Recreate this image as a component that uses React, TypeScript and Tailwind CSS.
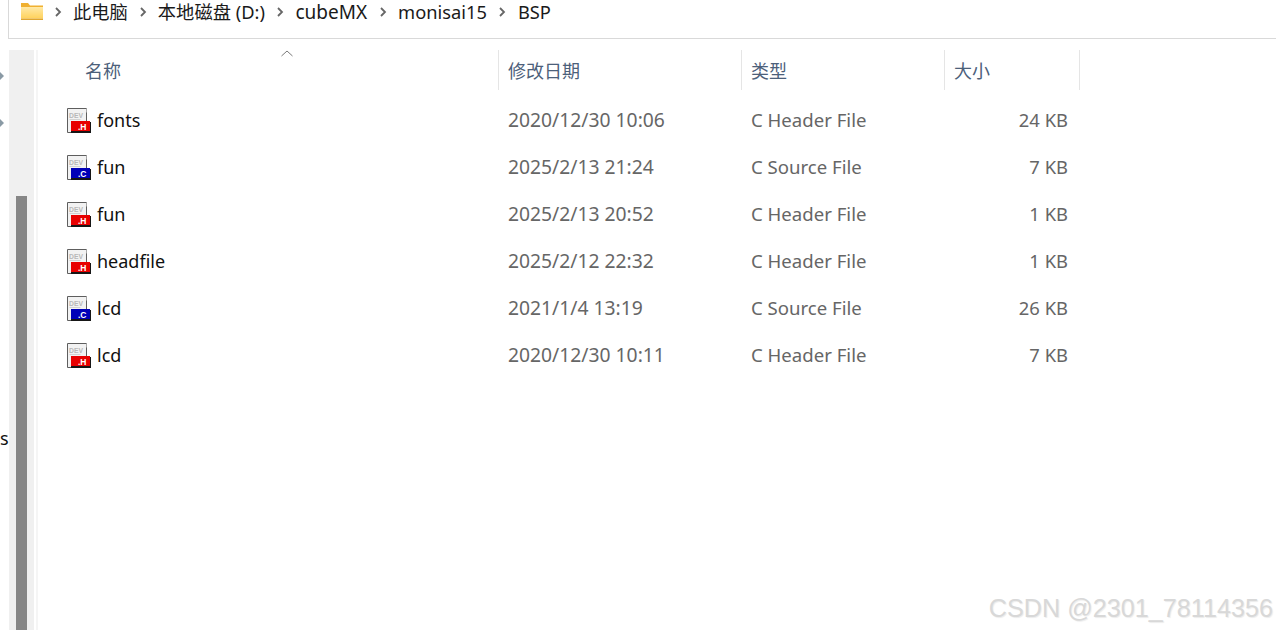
import React from "react";

interface FileRow {
  name: string;
  date: string;
  kind: "c" | "h";
  size: string;
}

const rows: FileRow[] = [
  { name: "fonts", date: "2020/12/30 10:06", kind: "h", size: "24 KB" },
  { name: "fun", date: "2025/2/13 21:24", kind: "c", size: "7 KB" },
  { name: "fun", date: "2025/2/13 20:52", kind: "h", size: "1 KB" },
  { name: "headfile", date: "2025/2/12 22:32", kind: "h", size: "1 KB" },
  { name: "lcd", date: "2021/1/4 13:19", kind: "c", size: "26 KB" },
  { name: "lcd", date: "2020/12/30 10:11", kind: "h", size: "7 KB" },
];

const crumbs = [
  { label: "此电脑", className: "mx-[11px]" },
  { label: "本地磁盘 (D:)", className: "mx-[11px]" },
  { label: "cubeMX", className: "mx-[11.5px] text-[19px]" },
  { label: "monisai15", className: "mx-[11.5px]" },
  { label: "BSP", className: "mx-[11.5px]" },
];

const FolderIcon = () => (
  <svg width="22" height="17" viewBox="0 0 22 17" className="shrink-0 -mt-[1px]">
    <defs>
      <linearGradient id="folderBody" x1="0" y1="0" x2="0" y2="1">
        <stop offset="0" stopColor="#ffe9a6" />
        <stop offset="1" stopColor="#ffd25c" />
      </linearGradient>
    </defs>
    <path d="M0 0h7l2 2.500h13V5H0z" fill="#f0b030" />
    <path d="M0 4h22v11.500H0z" fill="url(#folderBody)" />
    <path d="M0 15.500h22V17H0z" fill="#e0a630" />
  </svg>
);

const Chevron = () => (
  <svg width="8" height="10" viewBox="0 0 8 10" className="shrink-0">
    <path d="M2 1l4 4-4 4" fill="none" stroke="#666666" strokeWidth="1.800" />
  </svg>
);

const FileIcon = ({ kind }: { kind: "c" | "h" }) => {
  const fill = kind === "h" ? "#e80000" : "#0000b8";
  return (
    <svg width="24" height="25" viewBox="0 0 24 25" className="shrink-0">
      <path d="M0.500 0.500h19v24h-19z" fill="#f2f2f2" stroke="#5e5e5e" />
      <path d="M19.500 0.500v4" stroke="#a8a8a8" />
      <text x="2" y="9.500" fontSize="8" textLength="14" lengthAdjust="spacingAndGlyphs" fontFamily="Liberation Sans, sans-serif" fontWeight="700" fill="#b8b8b8">
        DEV
      </text>
      <path d="M2.500 11.500h11" stroke="#d2d2d2" />
      <rect x="4" y="14" width="20" height="11" fill="#161616" />
      <rect x="4" y="13" width="19" height="10" fill={fill} />
      <text x="11" y="21.500" fontSize="8.500" fontFamily="Liberation Sans, sans-serif" fontWeight="700" fill="#ffffff">
        {kind === "h" ? ".H" : ".C"}
      </text>
    </svg>
  );
};

const HeaderCell = ({ label, width }: { label: string; width: string }) => (
  <div className={`${width} h-full flex items-center pl-[9px] pt-[3px] border-r border-[#e5e5e5] text-[#4c607a] shrink-0`}>
    {label}
  </div>
);

export default function App() {
  return (
    <div
      className="w-[1276px] h-[630px] bg-white overflow-hidden flex flex-col text-[18px] relative"
      style={{ fontFamily: '"Noto Sans", "Noto Sans CJK SC", sans-serif' }}
    >
      {/* Address bar */}
      <div className="h-[39px] ml-2 border-l border-b border-[#d9d9d9] flex items-center pl-3 pb-[15px] text-[#1a1a1a] shrink-0">
        <FolderIcon />
        <div className="flex items-center ml-[11px] text-[18.3px] leading-[22px]">
          {crumbs.map((c) => (
            <React.Fragment key={c.label}>
              <Chevron />
              <span className={`${c.className} leading-[22px] whitespace-nowrap`}>{c.label}</span>
            </React.Fragment>
          ))}
        </div>
      </div>

      <div className="flex flex-1 mt-[11px] min-h-0">
        {/* Clipped nav pane edge */}
        <div className="w-[9px] shrink-0 flex flex-col text-[#111] overflow-hidden">
          <div className="mt-[22px] w-0 h-0 border-y-[4px] border-y-transparent border-l-[4px] border-l-[#8a9aa5]" />
          <div className="mt-[39px] w-0 h-0 border-y-[4px] border-y-transparent border-l-[4px] border-l-[#8a9aa5]" />
          <div className="mt-[302px] leading-none">s</div>
        </div>

        {/* Scrollbar */}
        <div className="w-[25px] shrink-0 bg-[#f0f0f0] flex flex-col justify-end items-center pr-[1px]">
          <div className="w-[11px] h-[434px] bg-[#868686]" />
        </div>
        <div className="w-[2px] shrink-0" />
        <div className="w-[2px] shrink-0 bg-[#f5f5f5]" />

        {/* File list */}
        <div className="flex-1 min-w-0">
          <div className="h-[40px] flex items-center">
            <div className="w-[461px] h-full flex items-center pl-[47px] pt-[3px] border-r border-[#e5e5e5] text-[#4c607a] relative shrink-0">
              名称
              <svg width="12" height="7" viewBox="0 0 12 7" className="absolute left-[243px] top-0">
                <path d="M0.500 6l5.500-5 5.500 5" fill="none" stroke="#7a7a7a" />
              </svg>
            </div>
            <HeaderCell label="修改日期" width="w-[243px]" />
            <HeaderCell label="类型" width="w-[203px]" />
            <HeaderCell label="大小" width="w-[135px]" />
          </div>

          <div className="mt-[7px]">
            {rows.map((r, i) => (
              <div key={i} className="h-[47px] flex items-center">
                <div className="w-[461px] flex items-center pl-[29px] gap-[6px] text-[#111] shrink-0">
                  <FileIcon kind={r.kind} />
                  {r.name}
                </div>
                <div className="w-[243px] pl-[9px] text-[#666] text-[19.3px] shrink-0">{r.date}</div>
                <div className="w-[203px] pl-[9px] mb-[2px] text-[#666] text-[18.6px] shrink-0">
                  {r.kind === "h" ? "C Header File" : "C Source File"}
                </div>
                <div className="w-[123px] mb-[2px] text-right text-[#666] text-[18.4px] shrink-0">{r.size}</div>
              </div>
            ))}
          </div>
        </div>
      </div>

      {/* CSDN watermark */}
      <div
        className="absolute right-[3px] bottom-[9px] text-[25.2px] leading-none text-[#d8d8d8] [text-shadow:1px_1px_1px_#ececec]"
        style={{ fontFamily: '"Liberation Sans", sans-serif' }}
      >
        CSDN @2301_78114356
      </div>
    </div>
  );
}
